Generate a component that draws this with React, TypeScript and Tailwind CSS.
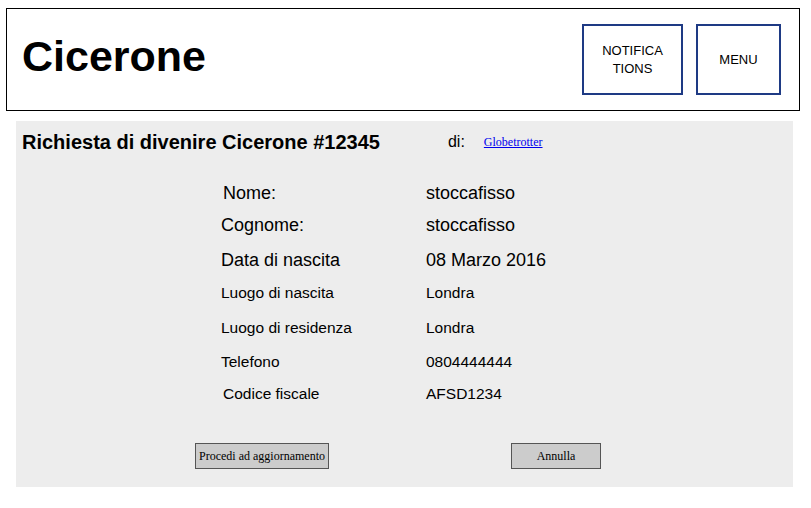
const rows: { label: string; value: string; size: string; mt: string; indent?: boolean }[] = [
  { label: 'Nome:', value: 'stoccafisso', size: 'text-[18px]', mt: 'mt-[22px]', indent: true },
  { label: 'Cognome:', value: 'stoccafisso', size: 'text-[18px]', mt: 'mt-0' },
  { label: 'Data di nascita', value: '08 Marzo 2016', size: 'text-[18px]', mt: 'mt-[3px]' },
  { label: 'Luogo di nascita', value: 'Londra', size: 'text-[15.5px]', mt: 'mt-px' },
  { label: 'Luogo di residenza', value: 'Londra', size: 'text-[15.5px]', mt: 'mt-[3px]' },
  { label: 'Telefono', value: '0804444444', size: 'text-[15.5px]', mt: 'mt-[2px]' },
  { label: 'Codice fiscale', value: 'AFSD1234', size: 'text-[15.5px]', mt: 'mt-0', indent: true },
];

export default function App() {
  return (
    <div className="w-[811px] h-[508px] bg-white font-['Liberation_Sans',Arial,sans-serif] text-black">
      <header className="ml-[6px] mt-[8px] w-[794px] h-[103px] border border-black flex items-center justify-between pl-[15px] pr-[18px]">
        <h1 className="text-[43px] font-bold leading-none -mt-[6px]">Cicerone</h1>
        <div className="flex gap-[13px]">
          <button className="w-[101px] h-[71px] border-2 border-[#1e3a84] text-[13px] leading-[18px] flex items-center justify-center text-center">
            NOTIFICA
            <br />
            TIONS
          </button>
          <button className="w-[85px] h-[71px] border-2 border-[#1e3a84] text-[13px] flex items-center justify-center">
            MENU
          </button>
        </div>
      </header>

      <main className="ml-[16px] mt-[10px] w-[777px] h-[366px] bg-[#ededed]">
        <div className="flex items-center pt-[7px] h-[34px]">
          <h2 className="pl-[6px] text-[20px] font-bold leading-[28px]">Richiesta di divenire Cicerone #12345</h2>
          <span className="ml-[68px] text-[16px]">di:</span>
          <a href="#" className="ml-[19px] text-[12px] text-[#0000ee] underline font-['Liberation_Serif',serif]">
            Globetrotter
          </a>
        </div>

        <div className="flex flex-col">
          {rows.map((r) => (
            <div key={r.label} className={`flex items-center h-[32px] ${r.mt} ${r.size}`}>
              <span className={r.indent ? 'pl-[207px] w-[410px] shrink-0' : 'pl-[205px] w-[410px] shrink-0'}>
                {r.label}
              </span>
              <span>{r.value}</span>
            </div>
          ))}
        </div>

        <div className="flex mt-[33px] pl-[179px] gap-[182px] font-['Liberation_Serif',serif] text-[12px]">
          <button className="w-[134px] h-[26px] bg-[#cccccc] border border-[#555] flex items-center justify-center">
            Procedi ad aggiornamento
          </button>
          <button className="w-[90px] h-[26px] bg-[#cccccc] border border-[#555] flex items-center justify-center">
            Annulla
          </button>
        </div>
      </main>
    </div>
  );
}
